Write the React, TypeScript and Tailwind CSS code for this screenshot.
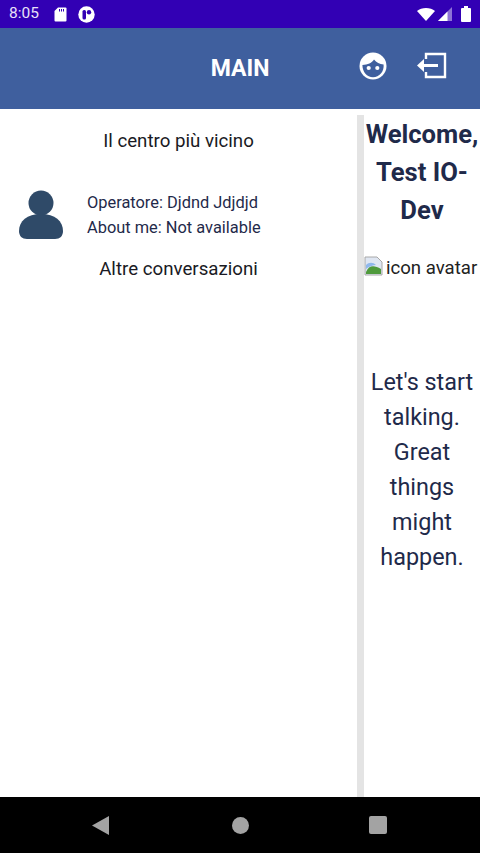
const fontStack = "font-[Roboto,'Liberation_Sans',sans-serif]"

function StatusBar() {
  return (
    <div className="flex h-[28px] shrink-0 items-center bg-[#3200b4] pl-[9px] pr-[9px] text-white">
      <span className="text-[15.5px] leading-none text-[#e8e0f8]">8:05</span>
      <svg className="ml-[15px]" width="13" height="15" viewBox="0 0 13 15">
        <path d="M4 0.5h7.5a1 1 0 0 1 1 1v12a1 1 0 0 1-1 1h-10a1 1 0 0 1-1-1V4z" fill="#fff" />
        <path d="M5 2h1v2.5H5zM7 2h1v2.5H7zM9 2h1v2.5H9z" fill="#3200b4" />
      </svg>
      <svg className="ml-[11px]" width="17" height="17" viewBox="0 0 17 17">
        <circle cx="8.5" cy="8.5" r="8.2" fill="#fff" />
        <rect x="4.5" y="4" width="3.5" height="9.5" rx="1.5" fill="#3200b4" />
        <circle cx="11" cy="6.2" r="2.2" fill="#3200b4" />
      </svg>
      <div className="ml-auto flex items-center gap-[2px]">
        <svg width="18" height="14" viewBox="0 0 18 14">
          <path d="M0 4C4.5 0 13.5 0 18 4L9 14z" fill="#fff" />
        </svg>
        <svg width="16" height="16" viewBox="0 0 16 16">
          <path d="M15 1v14H1z" fill="#fff" fillOpacity="0.45" />
          <path d="M10.5 5.5V15H1z" fill="#fff" />
        </svg>
        <svg className="ml-[6px]" width="10" height="16" viewBox="0 0 10 16">
          <path d="M3 0h4v2h2a1 1 0 0 1 1 1v12a1 1 0 0 1-1 1H1a1 1 0 0 1-1-1V3a1 1 0 0 1 1-1h2z" fill="#fff" />
        </svg>
      </div>
    </div>
  )
}

function Header() {
  return (
    <div className="relative flex h-[81px] shrink-0 items-center justify-center bg-[#3f5f9e]">
      <h1 className="pt-[2px] text-[23px] font-bold text-white">MAIN</h1>
      <svg className="absolute left-[359px] top-[24px]" width="28" height="28" viewBox="0 0 28 28">
        <circle cx="14" cy="14" r="13.5" fill="#fff" />
        <path d="M3.4 13c5.4 0 9.4-2 11.6-5.4 2.4 3 5.6 4.6 9.6 4.8 0.8 7-4.4 12.8-10.6 12.8-6 0-10.6-5.2-10.6-12.2z" fill="#3f5f9e" />
        <circle cx="9.7" cy="16" r="2.1" fill="#fff" />
        <circle cx="18.3" cy="16" r="2.1" fill="#fff" />
      </svg>
      <svg className="absolute left-[416px] top-[24px]" width="31" height="27" viewBox="0 0 31 27" fill="none">
        <path d="M10 7V2h19v23H10v-5" stroke="#fff" strokeWidth="2.4" />
        <path d="M22 13.5H6" stroke="#fff" strokeWidth="3" />
        <path d="M1 13.5l7-6.5v13z" fill="#fff" />
      </svg>
    </div>
  )
}

function OperatorRow() {
  return (
    <div className="mt-[36px] flex items-center pl-[18px] text-left">
      <svg width="46" height="50" viewBox="0 0 46 50">
        <circle cx="23" cy="13" r="12.5" fill="#2f4a68" />
        <path d="M1 41c0-10 8-17 22-17s22 7 22 17c0 5-3 8-8 8H9c-5 0-8-3-8-8z" fill="#2f4a68" />
      </svg>
      <div className="ml-[23px] text-[16.4px] leading-[25px] text-[#1f2a4a]">
        <p>Operatore: Djdnd Jdjdjd</p>
        <p>About me: Not available</p>
      </div>
    </div>
  )
}

function LeftPanel() {
  return (
    <div className="w-[357px] shrink-0 pt-[20px] text-center">
      <p className="text-[18.7px] leading-[25px] text-[#1a1a24]">Il centro più vicino</p>
      <OperatorRow />
      <p className="mt-[17px] text-[18.7px] leading-[25px] text-[#1a1a24]">Altre conversazioni</p>
    </div>
  )
}

function RightPanel() {
  return (
    <div className="mt-[6px] min-w-0 flex-1 border-l-[7px] border-[#e4e4e4] text-center text-[#1f2a4a]">
      <h2 className="text-[25.6px] font-bold leading-[38px]">Welcome, Test IO-Dev</h2>
      <div className="mt-[26px] flex h-[96px] items-start text-[18.6px] leading-[26px] text-[#222]">
        <svg className="mt-[1px] shrink-0" width="20" height="20" viewBox="0 0 20 20">
          <path d="M1 1h12l5 5v13H1z" fill="#dfe6f2" stroke="#a8a8a8" />
          <path d="M2 16c3-7 8-7 15-3v5H2z" fill="#4f9a3c" />
          <path d="M2 9c3-3 7-3 10 0-3 0-6 1-10 4z" fill="#8fb8ec" />
        </svg>
        <span className="ml-[2px] whitespace-nowrap">icon avatar</span>
      </div>
      <p className="mt-[14px] px-[4px] text-[23.4px] leading-[35px]">Let's start talking. Great things might happen.</p>
    </div>
  )
}

function NavBar() {
  return (
    <div className="flex h-[56px] shrink-0 items-center bg-black pl-[92px] pr-[93px]">
      <svg width="17" height="19" viewBox="0 0 17 19">
        <path d="M17 0v19L0 9.5z" fill="#a3a3a3" />
      </svg>
      <div className="ml-[123px] size-[17px] rounded-full bg-[#a3a3a3]" />
      <div className="ml-auto size-[18px] rounded-[2px] bg-[#a3a3a3]" />
    </div>
  )
}

export default function App() {
  return (
    <div className={`flex h-[853px] w-[480px] flex-col overflow-hidden bg-white ${fontStack}`}>
      <StatusBar />
      <Header />
      <div className="flex min-h-0 flex-1">
        <LeftPanel />
        <RightPanel />
      </div>
      <NavBar />
    </div>
  )
}
